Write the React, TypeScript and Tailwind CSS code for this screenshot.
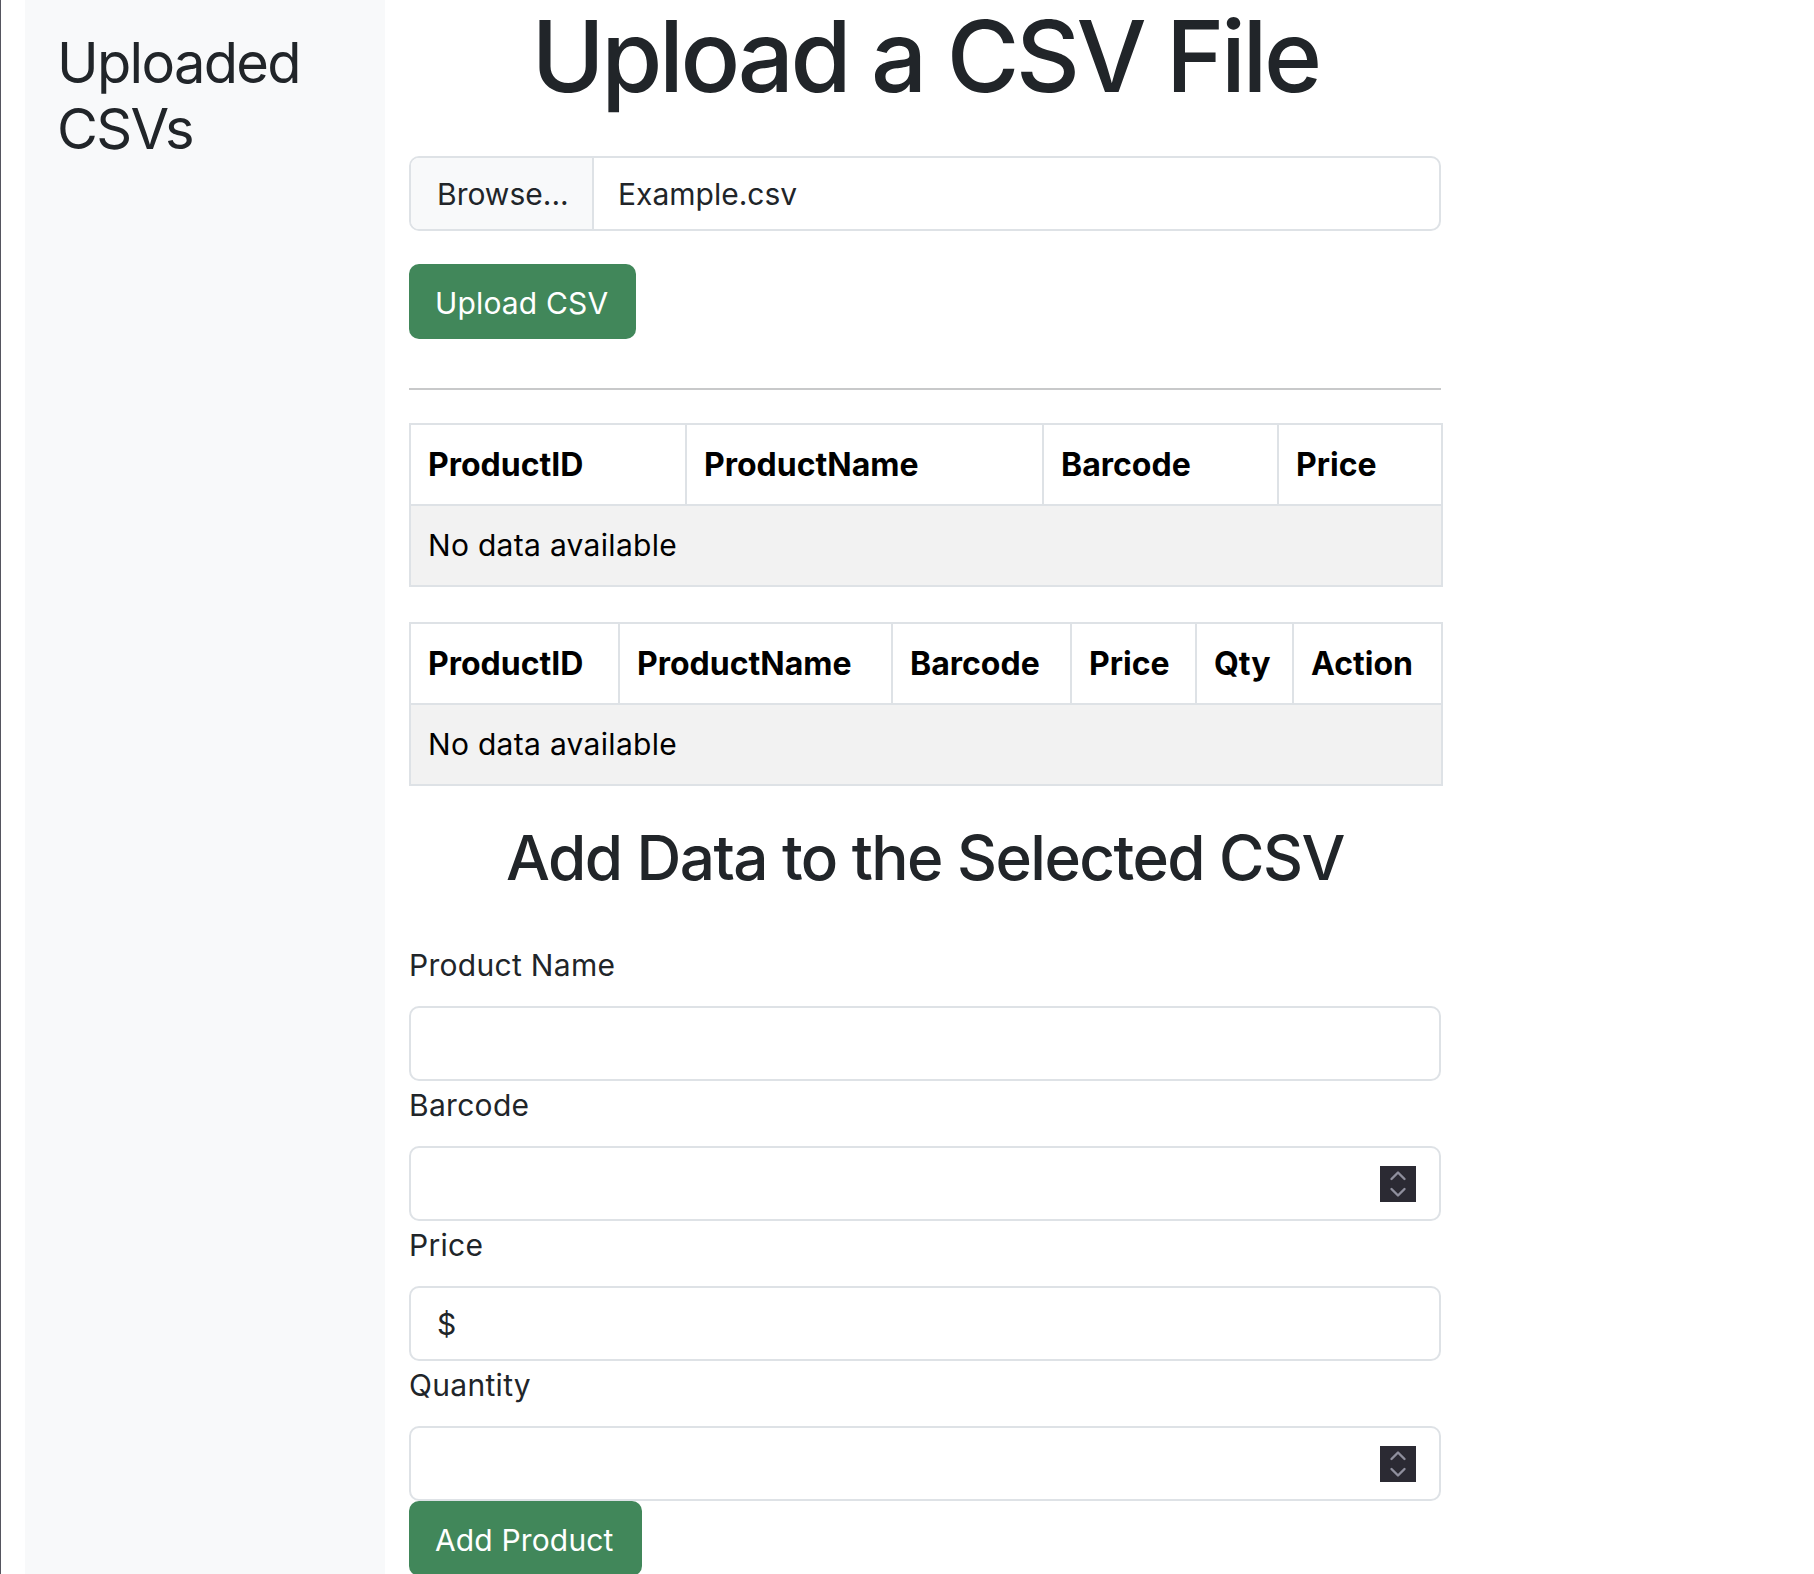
import React from "react";

function Spinner() {
  return (
    <div className="w-[36px] h-[36px] bg-[#2b2a33]">
      <svg width="36" height="36" viewBox="0 0 36 36" fill="none">
        <path d="M11.5 13 L18 6.5 L24.5 13" stroke="#8f8f9d" strokeWidth="2.4" strokeLinecap="round" strokeLinejoin="round" />
        <path d="M11.5 23 L18 29.5 L24.5 23" stroke="#8f8f9d" strokeWidth="2.4" strokeLinecap="round" strokeLinejoin="round" />
      </svg>
    </div>
  );
}

function Field({ label, children }: { label: string; children?: React.ReactNode }) {
  return (
    <div>
      <div className="text-[30px] leading-[48px] mb-[17px] text-[#212529] tracking-[0.01em]">{label}</div>
      <div className="h-[75px] border-2 border-[#dee2e6] rounded-[10px] bg-white flex items-center pl-[26px] pr-[23px] text-[30px] text-[#212529]">
        {children}
      </div>
    </div>
  );
}

function DataTable({ headers, widths }: { headers: string[]; widths: number[] }) {
  return (
    <table className="w-[1032px] table-fixed border-collapse border-2 border-[#dee2e6]">
      <colgroup>
        {widths.map((w, i) => (
          <col key={i} style={{ width: w }} />
        ))}
      </colgroup>
      <thead>
        <tr>
          {headers.map((h) => (
            <th
              key={h}
              className="h-[81px] border-2 border-[#dee2e6] bg-white text-left font-bold text-[32px] text-[#000000] px-[17px] p-0 align-middle"
            >
              {h}
            </th>
          ))}
        </tr>
      </thead>
      <tbody>
        <tr>
          <td
            colSpan={headers.length}
            className="h-[81px] border-2 border-[#dee2e6] bg-[#f2f2f2] text-left text-[30px] text-[#000000] px-[17px] align-middle tracking-[0.01em]"
          >
            No data available
          </td>
        </tr>
      </tbody>
    </table>
  );
}

export default function App() {
  return (
    <div
      className="min-h-screen flex bg-white border-l border-[#55555f] text-[#212529]"
      style={{ fontFamily: "Inter, 'Noto Sans', sans-serif" }}
    >
      <div className="w-[24px] shrink-0" />
      <aside className="w-[360px] shrink-0 bg-[#f8f9fa] pt-[30px] pl-[32px]">
        <h2 className="text-[56px] leading-[66px] tracking-[-0.03em] font-normal">
          Uploaded
          <br />
          CSVs
        </h2>
      </aside>
      <main className="pl-[24px] shrink-0">
        <div className="w-[1032px]">
          <h1 className="text-center text-[99px] leading-[108px] font-medium tracking-[-0.035em] pt-[2px]">
            Upload a CSV File
          </h1>
          <div className="mt-[46px] flex h-[75px] border-2 border-[#dee2e6] rounded-[10px] overflow-hidden text-[30px]">
            <div className="w-[183px] bg-[#f8f9fa] border-r-2 border-[#dee2e6] pl-[26px] pt-[2px] flex items-center">
              Browse...
            </div>
            <div className="pl-[24px] pt-[2px] flex items-center">Example.csv</div>
          </div>
          <button className="mt-[33px] block h-[75px] w-[227px] rounded-[10px] bg-[#41875a] text-white text-[30px] text-left pl-[26px] pt-[3px] tracking-[0.005em]">
            Upload CSV
          </button>
          <div className="mt-[49px] h-[2px] bg-[#c8c9ca]" />
          <div className="mt-[33px]">
            <DataTable headers={["ProductID", "ProductName", "Barcode", "Price"]} widths={[276, 357, 235, 164]} />
          </div>
          <div className="mt-[35px]">
            <DataTable
              headers={["ProductID", "ProductName", "Barcode", "Price", "Qty", "Action"]}
              widths={[209, 273, 179, 125, 97, 149]}
            />
          </div>
          <h2 className="mt-[35px] text-center text-[62px] leading-[74px] font-medium tracking-[-0.025em]">
            Add Data to the Selected CSV
          </h2>
          <div className="mt-[46px]">
            <Field label="Product Name" />
            <Field label="Barcode">
              <div className="ml-auto">
                <Spinner />
              </div>
            </Field>
            <Field label="Price">
              <span className="pt-[2px]">$</span>
            </Field>
            <Field label="Quantity">
              <div className="ml-auto">
                <Spinner />
              </div>
            </Field>
          </div>
          <button className="block h-[75px] w-[233px] rounded-[10px] bg-[#41875a] text-white text-[30px] text-left pl-[26px] pt-[3px] tracking-[0.005em]">
            Add Product
          </button>
        </div>
      </main>
    </div>
  );
}
